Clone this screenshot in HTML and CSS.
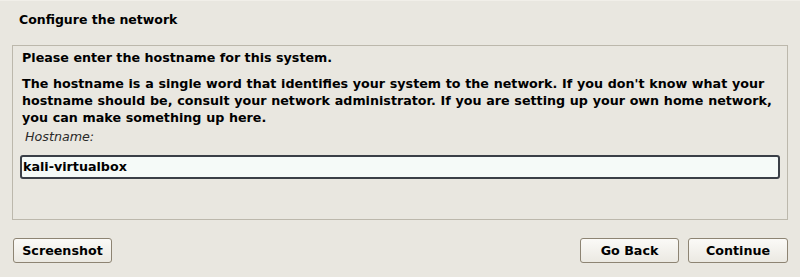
FILE: index.html
```html
<!DOCTYPE html>
<html>
<head>
<meta charset="utf-8">
<link rel="stylesheet" href="styles.css">
</head>
<body>
<div class="page">
  <div class="title">Configure the network</div>
  <div class="frame">
    <p class="lead">Please enter the hostname for this system.</p>
    <p class="desc">The hostname is a single word that identifies your system to the network. If you don't know what your hostname should be, consult your network administrator. If you are setting up your own home network, you can make something up here.</p>
    <div class="label">Hostname:</div>
    <div class="input">kali-virtualbox</div>
  </div>
  <div class="buttons">
    <button class="btn btn-shot">Screenshot</button>
    <div class="spacer"></div>
    <button class="btn">Go Back</button>
    <button class="btn btn-continue">Continue</button>
  </div>
</div>
</body>
</html>
```
FILE: styles.css
```css
html, body {
  margin: 0;
  padding: 0;
}
body {
  width: 800px;
  height: 277px;
  background: #e9e7e0;
  font-family: "DejaVu Sans", sans-serif;
  font-size: 12.7px;
  color: #000;
  overflow: hidden;
}
.page {
  display: flex;
  flex-direction: column;
  height: 277px;
  border-top: 1px solid #f1efe9;
  box-sizing: border-box;
}
.title {
  font-weight: bold;
  padding: 10px 0 0 19px;
  height: 44px;
  flex-shrink: 0;
  box-sizing: border-box;
  line-height: 17px;
  font-size: 12.5px;
}
.frame {
  margin: 0 12px;
  height: 175px;
  flex-shrink: 0;
  border: 1px solid #bcb8ac;
  box-sizing: border-box;
  padding: 3px 7px 0 7px;
  line-height: 17px;
}
.lead, .desc {
  margin: 0;
  padding-left: 2px;
  font-weight: bold;
}
.lead {
  margin-bottom: 9px;
}
.desc {
  word-spacing: 0.3px;
}
.label {
  font-style: italic;
  padding-left: 5px;
  color: #2a2a2a;
  margin-top: 2px;
}
.input {
  margin-top: 10px;
  height: 24px;
  box-sizing: border-box;
  border: 2px solid #3a3f47;
  border-radius: 3px;
  background: #f5faf8;
  font-weight: bold;
  padding-left: 1px;
  line-height: 20px;
}
.buttons {
  display: flex;
  margin: 18px 12px 0 13px;
  gap: 9px;
}
.spacer { flex: 1; }
.btn {
  font-family: "DejaVu Sans", sans-serif;
  font-size: 12.7px;
  font-weight: bold;
  width: 99px;
  height: 25px;
  padding: 0;
  border: 1px solid #8d8473;
  border-radius: 3px;
  background: linear-gradient(#fbfaf7, #ebe9e2);
  color: #000;
}
.btn-continue { width: 100px; }
```
